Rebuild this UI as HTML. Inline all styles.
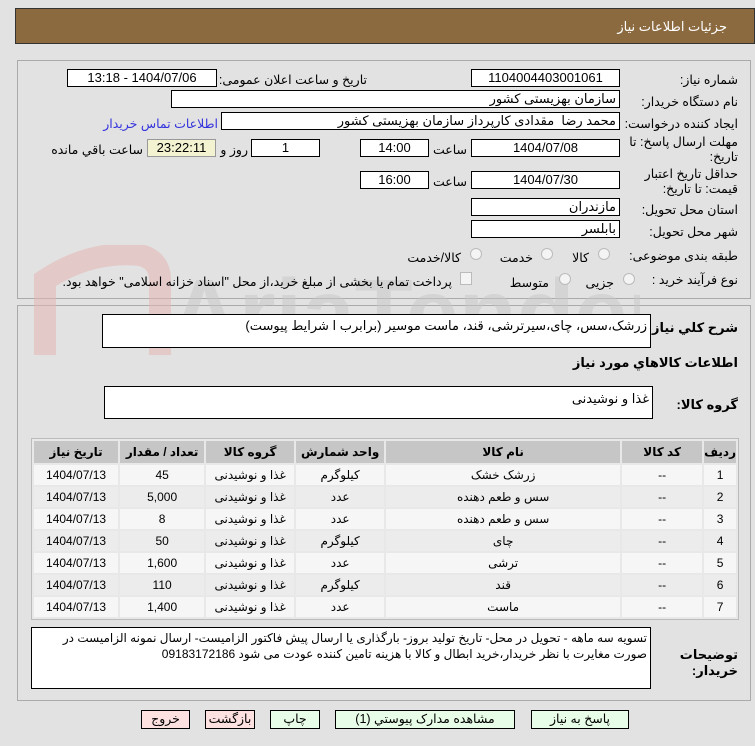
<!DOCTYPE html>
<html><head><meta charset="utf-8"><style>
*{box-sizing:border-box}
body{margin:0;width:755px;height:746px;background:#e2e2e2;font-family:"Liberation Sans","DejaVu Sans",sans-serif;font-size:12px;color:#000;position:relative;overflow:hidden}
.a{position:absolute}
.f{position:absolute;background:#fff;border:1px solid #000;height:18px;line-height:16px;text-align:center;font-size:13px;direction:rtl}
.fr{text-align:right;padding-right:3px}
.l{position:absolute;direction:rtl;text-align:right;white-space:nowrap;font-size:12.5px}
.panel{position:absolute;border:1px solid #aaa;background:#e2e2e2}
table{border-collapse:separate;border-spacing:2px;position:absolute;left:31px;top:438px;width:708px;background:#e8e8e8;border:1px solid #bbb;direction:rtl;font-size:12px}
td,th{height:20px;text-align:center;padding:0}
th{background:#c6c6c6;height:22px;font-weight:bold}
tr:nth-child(even) td{background:#f6f6f6}
tr:nth-child(odd) td{background:#ececec}
.btn{position:absolute;top:710px;height:19px;border:1px solid #000;background:#e8fde8;text-align:center;line-height:17px;font-size:12.5px;direction:rtl}
.pk{background:#fde0e0}
.rad{position:absolute;width:12px;height:12px;border-radius:50%;border:1px solid #bbb;background:#f4f4f4}
</style></head><body>
<div class="a" style="left:15px;top:8px;width:740px;height:36px;background:#8b6a40;border:1px solid #333"></div>
<div class="l" style="right:28px;top:19px;color:#fff;font-size:13px">جزئیات اطلاعات نیاز</div>

<div class="panel" style="left:17px;top:60px;width:734px;height:239px"></div>
<div class="panel" style="left:17px;top:305px;width:734px;height:396px"></div>

<!-- watermark -->
<svg class="a" style="left:20px;top:245px" width="620" height="110">
<path d="M25 110 L25 35 Q70 5 120 10 Q140 15 140 35 L140 110" fill="none" stroke="#e6b4b4" stroke-width="22" opacity=".55"/>
<text x="150" y="100" font-size="95" font-family="Liberation Sans" font-weight="bold" fill="#c8c8c8" opacity=".5">AriaTender.net</text>
</svg>

<div class="l" style="right:17px;top:72px">شماره نیاز:</div>
<div class="f" style="left:471px;top:69px;width:149px">1104004403001061</div>
<div class="l" style="right:388px;top:72px">تاریخ و ساعت اعلان عمومی:</div>
<div class="f" style="left:67px;top:69px;width:150px">1404/07/06 - 13:18</div>

<div class="l" style="right:17px;top:94px">نام دستگاه خریدار:</div>
<div class="f fr" style="left:171px;top:90px;width:449px">سازمان بهزیستی کشور</div>

<div class="l" style="right:17px;top:116px">ایجاد کننده درخواست:</div>
<div class="f fr" style="left:221px;top:112px;width:399px">محمد رضا &nbsp;مقدادی کارپرداز سازمان بهزیستی کشور</div>
<div class="l" style="right:537px;top:116px;color:#3333dd">اطلاعات تماس خریدار</div>

<div class="l" style="right:17px;top:135px;line-height:15px">مهلت ارسال پاسخ: تا<br>تاریخ:</div>
<div class="f" style="left:471px;top:139px;width:149px">1404/07/08</div>
<div class="l" style="right:288px;top:142px">ساعت</div>
<div class="f" style="left:360px;top:139px;width:69px">14:00</div>
<div class="f" style="left:251px;top:139px;width:69px">1</div>
<div class="l" style="right:507px;top:142px">روز و</div>
<div class="f" style="left:147px;top:139px;width:69px;background:#f3f3d2;border-color:#999">23:22:11</div>
<div class="l" style="right:612px;top:142px">ساعت باقي مانده</div>

<div class="l" style="right:17px;top:167px;line-height:15px">حداقل تاریخ اعتبار<br>قیمت: تا تاریخ:</div>
<div class="f" style="left:471px;top:171px;width:149px">1404/07/30</div>
<div class="l" style="right:288px;top:174px">ساعت</div>
<div class="f" style="left:360px;top:171px;width:69px">16:00</div>

<div class="l" style="right:17px;top:202px">استان محل تحویل:</div>
<div class="f fr" style="left:471px;top:198px;width:149px">مازندران</div>
<div class="l" style="right:17px;top:224px">شهر محل تحویل:</div>
<div class="f fr" style="left:471px;top:220px;width:149px">بابلسر</div>

<div class="l" style="right:17px;top:248px">طبقه بندی موضوعی:</div>
<div class="rad" style="left:598px;top:248px"></div><div class="l" style="right:166px;top:250px">کالا</div>
<div class="rad" style="left:541px;top:248px"></div><div class="l" style="right:222px;top:250px">خدمت</div>
<div class="rad" style="left:470px;top:248px"></div><div class="l" style="right:294px;top:250px">کالا/خدمت</div>

<div class="l" style="right:17px;top:272px">نوع فرآیند خرید :</div>
<div class="rad" style="left:623px;top:273px"></div><div class="l" style="right:141px;top:275px">جزیی</div>
<div class="rad" style="left:559px;top:273px"></div><div class="l" style="right:206px;top:275px">متوسط</div>
<div class="a" style="left:460px;top:272px;width:12px;height:13px;border:1px solid #bbb;background:#f4f4f4"></div>
<div class="l" style="right:303px;top:274px">پرداخت تمام یا بخشی از مبلغ خرید،از محل "اسناد خزانه اسلامی" خواهد بود.</div>

<div class="l" style="right:17px;top:320px;font-weight:bold;font-size:13px">شرح کلي نیاز:</div>
<div class="f fr" style="left:102px;top:314px;width:549px;height:34px;text-align:right;line-height:22px">زرشک،سس، چای،سیرترشی، قند، ماست موسیر (برابرب ا شرایط پیوست)</div>
<div class="l" style="right:17px;top:355px;font-weight:bold;font-size:13px">اطلاعات کالاهاي مورد نیاز</div>
<div class="l" style="right:17px;top:397px;font-weight:bold;font-size:13px">گروه کالا:</div>
<div class="f fr" style="left:104px;top:386px;width:549px;height:33px;line-height:24px">غذا و نوشیدنی</div>

<table>
<tr><th style="width:28px">ردیف</th><th style="width:80px">کد کالا</th><th style="width:234px">نام کالا</th><th style="width:88px">واحد شمارش</th><th style="width:88px">گروه کالا</th><th style="width:84px">تعداد / مقدار</th><th>تاریخ نیاز</th></tr>
<tr><td>1</td><td>--</td><td>زرشک خشک</td><td>کیلوگرم</td><td>غذا و نوشیدنی</td><td>45</td><td>1404/07/13</td></tr>
<tr><td>2</td><td>--</td><td>سس و طعم دهنده</td><td>عدد</td><td>غذا و نوشیدنی</td><td>5,000</td><td>1404/07/13</td></tr>
<tr><td>3</td><td>--</td><td>سس و طعم دهنده</td><td>عدد</td><td>غذا و نوشیدنی</td><td>8</td><td>1404/07/13</td></tr>
<tr><td>4</td><td>--</td><td>چای</td><td>کیلوگرم</td><td>غذا و نوشیدنی</td><td>50</td><td>1404/07/13</td></tr>
<tr><td>5</td><td>--</td><td>ترشی</td><td>عدد</td><td>غذا و نوشیدنی</td><td>1,600</td><td>1404/07/13</td></tr>
<tr><td>6</td><td>--</td><td>قند</td><td>کیلوگرم</td><td>غذا و نوشیدنی</td><td>110</td><td>1404/07/13</td></tr>
<tr><td>7</td><td>--</td><td>ماست</td><td>عدد</td><td>غذا و نوشیدنی</td><td>1,400</td><td>1404/07/13</td></tr>
</table>

<div class="l" style="right:17px;top:647px;font-weight:bold;font-size:13px;line-height:16px">توضیحات<br>خریدار:</div>
<div class="f" style="left:31px;top:627px;width:620px;height:62px;text-align:right;line-height:16px;padding:2px 3px;white-space:normal;font-size:12px;letter-spacing:-0.1px">تسویه سه ماهه - تحویل در محل- تاریخ تولید بروز- بارگذاری یا ارسال پیش فاکتور الزامیست- ارسال نمونه الزامیست در صورت مغایرت با نظر خریدار،خرید ابطال و کالا با هزینه تامین کننده عودت می شود 09183172186</div>

<div class="btn" style="left:531px;width:98px">پاسخ به نیاز</div>
<div class="btn" style="left:335px;width:180px">مشاهده مدارک پیوستي (1)</div>
<div class="btn" style="left:270px;width:50px">چاپ</div>
<div class="btn pk" style="left:205px;width:50px">بازگشت</div>
<div class="btn pk" style="left:141px;width:49px">خروج</div>
</body></html>
